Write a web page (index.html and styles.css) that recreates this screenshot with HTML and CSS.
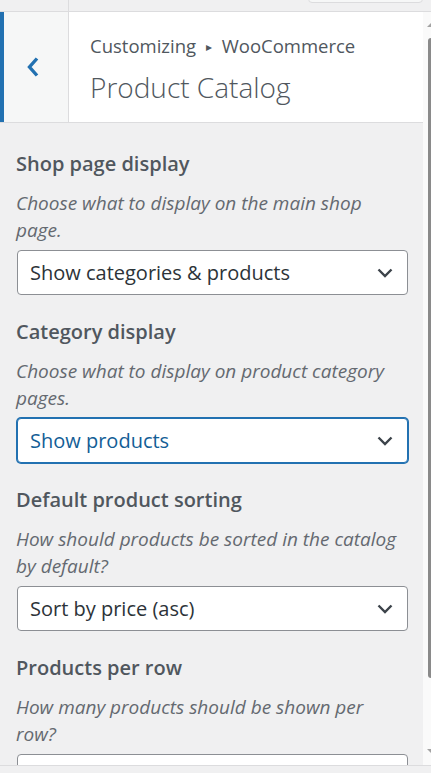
FILE: index.html
```html
<!DOCTYPE html>
<html>
  <head>
    <title>Product Catalog</title>
    <meta name="viewport" content="width=device-width, initial-scale=1.0">
    <link rel="stylesheet" href="styles.css">
  </head>
  <body>
    <div class="topbar">
      <div class="topbar-left"></div>
      <div class="topbar-box"></div>
    </div>

    <div class="panel">
      <div class="panel-main">
        <div class="section-head">
          <button class="back-button" type="button">
            <svg width="14" height="22" viewBox="0 0 14 22">
              <polyline points="11,2.5 3.5,11 11,19.5" fill="none" stroke="#2271b1" stroke-width="3.4"/>
            </svg>
          </button>
          <div class="section-title">
            <span class="action">Customizing <span class="sep">&#9656;</span> WooCommerce</span>
            <h3>Product Catalog</h3>
          </div>
        </div>

        <ul class="controls">
          <li class="control">
            <span class="control-title">Shop page display</span>
            <span class="control-desc">Choose what to display on the main shop page.</span>
            <div class="select">
              <span>Show categories &amp; products</span>
              <svg width="16" height="10" viewBox="0 0 16 10"><polyline points="1.5,1.5 8,8 14.5,1.5" fill="none" stroke="#3c434a" stroke-width="2.4"/></svg>
            </div>
          </li>
          <li class="control">
            <span class="control-title">Category display</span>
            <span class="control-desc">Choose what to display on product category pages.</span>
            <div class="select focused">
              <span>Show products</span>
              <svg width="16" height="10" viewBox="0 0 16 10"><polyline points="1.5,1.5 8,8 14.5,1.5" fill="none" stroke="#3c434a" stroke-width="2.4"/></svg>
            </div>
          </li>
          <li class="control">
            <span class="control-title">Default product sorting</span>
            <span class="control-desc">How should products be sorted in the catalog by default?</span>
            <div class="select">
              <span>Sort by price (asc)</span>
              <svg width="16" height="10" viewBox="0 0 16 10"><polyline points="1.5,1.5 8,8 14.5,1.5" fill="none" stroke="#3c434a" stroke-width="2.4"/></svg>
            </div>
          </li>
          <li class="control">
            <span class="control-title">Products per row</span>
            <span class="control-desc">How many products should be shown per row?</span>
            <div class="select"></div>
          </li>
        </ul>
      </div>

      <div class="scrollbar">
        <span class="arrow-up"></span>
        <span class="thumb"></span>
        <span class="arrow-down"></span>
      </div>
    </div>

    <div class="bottombar"></div>
  </body>
</html>
```

FILE: styles.css
```css
html, body {
  margin: 0;
  padding: 0;
  height: 773px;
  overflow: hidden;
}

body {
  background-color: #f0f0f1;
  font-family: "Open Sans", "Noto Sans", sans-serif;
  color: #50575e;
  display: flex;
  flex-direction: column;
}

.topbar {
  height: 11px;
  display: flex;
  border-bottom: 1px solid #dcdcde;
  flex-shrink: 0;
}

.topbar-left {
  width: 68px;
  border-right: 1px solid #dcdcde;
}

.topbar-box {
  width: 113px;
  height: 10px;
  margin-top: -9px;
  margin-left: auto;
  margin-right: 8px;
  border: 1px solid #dcdcde;
  border-radius: 4px;
  background-color: #f6f7f7;
}

.panel {
  height: 753px;
  display: flex;
  flex-shrink: 0;
}

.panel-main {
  width: 423px;
  overflow: hidden;
}

.section-head {
  height: 110px;
  display: flex;
  background-color: #fff;
  border-bottom: 1px solid #dcdcde;
}

.back-button {
  width: 69px;
  padding: 0 0 0 22px;
  margin: 0;
  border: none;
  border-left: 4px solid #2271b1;
  border-right: 1px solid #dcdcde;
  background-color: #f6f7f7;
  display: flex;
  align-items: center;
  cursor: pointer;
}

.section-title {
  padding: 21px 0 0 21px;
  display: flex;
  flex-direction: column;
}

.action {
  font-size: 18.5px;
  line-height: 26px;
  color: #50575e;
}

.action .sep {
  font-size: 12px;
  position: relative;
  top: -2px;
  margin: 0 5px;
}

.section-title h3 {
  margin: 6px 0 0;
  font-size: 28px;
  line-height: 38px;
  font-weight: 300;
  color: #50575e;
}

.controls {
  list-style: none;
  margin: 0;
  padding: 27px 18px 0 16px;
}

.control {
  margin-bottom: 23px;
}

.control-title {
  display: block;
  font-size: 20px;
  font-weight: 600;
  line-height: 28px;
  margin-bottom: 12px;
  color: #50575e;
}

.control-desc {
  display: block;
  font-size: 19px;
  font-style: italic;
  line-height: 27px;
  margin-bottom: 6px;
  color: #646970;
}

.select {
  width: 391px;
  height: 45px;
  margin-left: 1px;
  box-sizing: border-box;
  padding: 0 14px 0 12px;
  display: flex;
  align-items: center;
  justify-content: space-between;
  background-color: #fff;
  border: 1px solid #8c8f94;
  border-radius: 4px;
  font-size: 20px;
  color: #2c3338;
}

.select.focused {
  border-color: #2271b1;
  box-shadow: 0 0 0 1px #2271b1;
  color: #135e96;
}

.scrollbar {
  width: 8px;
  background-color: #fafafa;
  display: flex;
  flex-direction: column;
  align-items: flex-end;
}

.arrow-up {
  width: 0;
  height: 0;
  margin-top: 11px;
  border-left: 4px solid transparent;
  border-bottom: 4px solid #a3a3a3;
}

.thumb {
  width: 3px;
  height: 640px;
  margin-top: 11px;
  background-color: #8a8a8a;
  border-radius: 3px 0 0 3px;
}

.arrow-down {
  width: 0;
  height: 0;
  margin-top: auto;
  margin-bottom: 12px;
  border-left: 4px solid transparent;
  border-top: 4px solid #a3a3a3;
}

.bottombar {
  flex: 1;
  border-top: 1px solid #dcdcde;
}
```
